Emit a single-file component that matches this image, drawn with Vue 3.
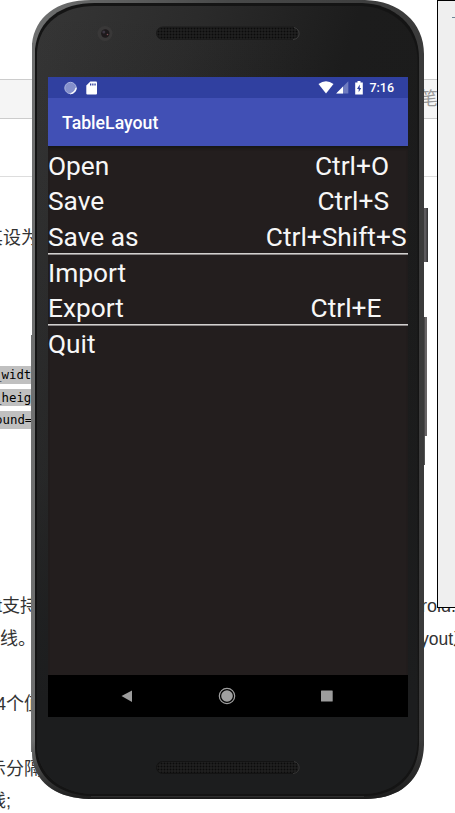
<script setup>
const commands = [
  { name: 'Open', shortcut: 'Ctrl+O', inset: 'mid' },
  { name: 'Save', shortcut: 'Ctrl+S', inset: 'mid' },
  { name: 'Save as', shortcut: 'Ctrl+Shift+S', inset: 'none' },
  { divider: true },
  { name: 'Import' },
  { name: 'Export', shortcut: 'Ctrl+E', inset: 'wide' },
  { divider: true },
  { name: 'Quit' }
]
</script>

<template>
  <div class="stage">
    <main class="article">
      <div class="toolbar"><span>笔</span></div>
      <div class="rule"></div>
      <p class="line first"><span class="cut-one">其设为</span></p>
      <div class="code">
        <code>_widt</code>
        <code>_heig</code>
        <code class="half">ound=</code>
      </div>
      <p class="line support"><span class="cut-t">t支持</span><span class="tail">roid.</span></p>
      <p class="line wire"><span>线。</span><span class="tail">yout及</span></p>
      <p class="line four"><span class="cut-four">4个值</span></p>
      <p class="line show"><span class="cut-show">示分隔</span></p>
      <p class="line last"><span class="cut-last">线;</span></p>
    </main>

    <aside class="window"><i></i></aside>

    <section class="phone">
      <svg class="chassis" width="400" height="801" viewBox="0 0 400 801">
        <defs>
          <linearGradient id="face" x1="0" y1="0" x2="1" y2=".65">
            <stop offset="0" stop-color="#363636" />
            <stop offset=".3" stop-color="#2b2b2b" />
            <stop offset=".6" stop-color="#1c1c1c" />
            <stop offset="1" stop-color="#1b1b1b" />
          </linearGradient>
          <linearGradient id="rim" x1="0" y1="0" x2="1" y2="0">
            <stop offset="0" stop-color="#6f7070" />
            <stop offset=".5" stop-color="#484949" />
            <stop offset="1" stop-color="#3a3a3a" />
          </linearGradient>
          <linearGradient id="foot" x1="0" y1="0" x2="0" y2="1">
            <stop offset="0" stop-color="#1c1d1e" stop-opacity="0" />
            <stop offset=".6" stop-color="#1c1d1e" stop-opacity=".3" />
            <stop offset=".88" stop-color="#1c1d1e" />
          </linearGradient>
          <linearGradient id="base" x1="0" y1="0" x2="0" y2="1">
            <stop offset="0" stop-color="#1c1c1c" stop-opacity="0" />
            <stop offset="1" stop-color="#1c1c1c" />
          </linearGradient>
          <pattern id="mesh" width="3" height="3" patternUnits="userSpaceOnUse">
            <rect width="3" height="3" fill="#202020" />
            <circle cx="1.500" cy="1.500" r="1" fill="#0b0b0b" />
          </pattern>
        </defs>
        <path d="M392 208h5v54h-5z" fill="#39393b" />
        <path d="M393 208h2.500v54H393z" fill="#5c5a5d" />
        <path d="M392 317h4v119h-4z" fill="#4b494a" />
        <path d="M394.500 317h1v119h-1z" fill="#858182" />
        <path d="M391 436h3v29h-3z" fill="#555" />
        <path d="M1 44C4 17 25 0 60 0H334C368 1 393 22 393 54V745C392 778 371 799 334 799H58C24 798 1 781 1 752H0V335H1Z" fill="url(#rim)" />
        <path d="M1 740V752C1 781 24 798 58 799H334C371 799 392 778 393 745V740Z" fill="url(#base)" />
        <path d="M4 49C7 20 30 3 64 3H331C363 4 388 25 388 58V744C387 775 366 796 333 796H60C28 795 4 777 4 748Z" fill="#141414" />
        <path d="M6 52C8 23 32 6 64 6H330C361 7 386.500 28 386.500 61V741C385.500 773 364 794 331 794H62C30 793 6 775 6 744Z" fill="url(#face)" />
        <path d="M6 52C8 23 32 6 64 6H330C361 7 386.500 28 386.500 61V741C385.500 773 364 794 331 794H62C30 793 6 775 6 744Z" fill="url(#foot)" />
        <path d="M60 796.500H333" stroke="#303030" />
        <circle cx="74" cy="33.500" r="7.500" fill="#393838" />
        <circle cx="74.300" cy="33.500" r="4.200" fill="#1d191b" />
        <circle cx="72.800" cy="32" r="1.500" fill="#3c3642" />
        <circle cx="76.500" cy="34.500" r=".8" fill="#805055" />
        <rect x="125.500" y="27" width="142.500" height="12.500" rx="6.200" fill="url(#mesh)" stroke="#1b1b1b" />
        <path d="M262 39.500C270 39 270 29 263 27.500" fill="none" stroke="#484848" stroke-width=".8" />
        <rect x="125.500" y="761.500" width="142.500" height="12" rx="6" fill="url(#mesh)" stroke="#131313" />
        <path d="M262 773.500C270 773 270 763 263 761.500" fill="none" stroke="#414141" stroke-width=".8" />
      </svg>

      <div class="screen">
        <header class="status">
          <svg width="14" height="14" viewBox="0 0 14 14">
            <circle cx="6.500" cy="7" r="5.700" fill="#8490cb" stroke="#aab4df" />
            <path d="M12.200 6.800A5.800 5.800 0 0 1 6.500 12.800Q11 11 12.200 6.800Z" fill="#fff" stroke="#fff" stroke-width=".8" />
          </svg>
          <svg class="sd" width="12" height="14" viewBox="0 0 12 14">
            <path d="M4.300.500H10Q11 .5 11 1.500V12.500Q11 13.500 10 13.500H1.300Q.3 13.500.3 12.500V4.500Z" fill="#fff" />
            <path d="M4 2.400h1.300v2.200H4zM6.200 2.400h1.300v2.200H6.200zM8.400 2.400h1.300v2.200H8.400z" fill="#3040a0" />
          </svg>
          <svg class="wifi" width="16" height="13" viewBox="0 0 16 13">
            <path d="M.5 3Q8-2.500 15.500 3L8 12.500Z" fill="#fff" />
          </svg>
          <svg class="cell" width="13" height="13" viewBox="0 0 13 13">
            <path d="M12.300.300V12.500H.2Z" fill="#6f7cc0" />
            <path d="M7 5.600V12.500H.2Z" fill="#fff" />
          </svg>
          <svg class="battery" width="8" height="14" viewBox="0 0 8 14">
            <path d="M2.500 0H5.500V1.500H7.800V13.500H.2V1.500H2.500Z" fill="#fff" />
            <path d="M4.800 3.500L2 8H3.700V11.300L6.200 6.900H4.700Z" fill="#3040a0" />
          </svg>
          <time>7:16</time>
        </header>
        <h1 class="appbar">TableLayout</h1>
        <div class="menu">
          <template v-for="(c, i) in commands" :key="i">
            <div v-if="c.divider" class="divider"></div>
            <div v-else class="row">
              <span>{{ c.name }}</span>
              <span v-if="c.shortcut" :class="['shortcut', c.inset]">{{ c.shortcut }}</span>
            </div>
          </template>
        </div>
        <nav class="nav">
          <svg width="20" height="20" viewBox="0 0 20 20"><path d="M4.500 10L15 4.500V16Z" fill="#9d9d9d" /></svg>
          <svg width="20" height="20" viewBox="0 0 20 20">
            <circle cx="10" cy="10" r="7.700" fill="none" stroke="#a0a0a0" stroke-width="1.200" />
            <circle cx="10" cy="10" r="5.800" fill="#a0a0a0" />
          </svg>
          <svg width="20" height="20" viewBox="0 0 20 20"><rect x="4" y="4.500" width="11.700" height="11" rx=".5" fill="#9d9d9d" /></svg>
        </nav>
      </div>
    </section>
  </div>
</template>

<style>
body {
  background: #fff;
  overflow: hidden;
}
</style>

<style scoped>
.stage {
  position: relative;
  width: 455px;
  height: 813px;
  overflow: hidden;
  background: #fff;
}
.article {
  display: flex;
  flex-direction: column;
  padding-top: 79px;
  color: #333;
  font: 18px/26px "Liberation Sans", "Noto Sans CJK SC", sans-serif;
}
.toolbar {
  display: flex;
  justify-content: flex-end;
  align-items: center;
  height: 40px;
  box-sizing: border-box;
  padding-right: 17px;
  border: solid #ccc;
  border-width: 1px 0;
  background: #f5f5f5;
  color: #999;
}
.rule {
  height: 1px;
  margin-top: 57px;
  background: #ddd;
}
.line {
  display: flex;
  justify-content: space-between;
  height: 26px;
  margin: 0;
  white-space: nowrap;
}
.first { margin-top: 48px; }
.cut-one { margin-left: -15px; }
.code {
  display: flex;
  flex-direction: column;
  align-items: flex-start;
  gap: 5px;
  margin-top: 115px;
}
.code code {
  height: 17.500px;
  margin-left: -6px;
  padding-right: 4px;
  background: #c0c0c0;
  color: #000;
  font: 12.400px/17px "DejaVu Sans Mono", monospace;
}
.code .half { margin-left: -5px; }
.support { margin-top: 164px; }
.cut-t { margin-left: -3px; }
.tail {
  width: 37px;
}
.support .tail { width: 34px; }
.wire { margin-top: 7px; }
.wire .tail { width: 35px; font-size: 17.500px; }
.four { margin-top: 39px; }
.cut-four { margin-left: -4px; }
.show { margin-top: 39px; }
.cut-show { margin-left: -12px; }
.last { margin-top: 6px; }
.cut-last { margin-left: -12px; }
.window {
  position: absolute;
  top: 0;
  left: 437px;
  width: 18px;
  height: 608px;
  box-sizing: border-box;
  padding: 16px 0 0 14px;
  border: solid #000;
  border-width: 1px 0 1px 1px;
  background: #efefef;
}
.window i {
  display: block;
  height: 1px;
  background: #6f8494;
}
.phone {
  position: absolute;
  top: 0;
  left: 31px;
  display: grid;
  padding: 77px 0 0 17px;
}
.chassis {
  position: absolute;
  top: 0;
  left: 0;
}
.screen {
  position: relative;
  display: flex;
  flex-direction: column;
  width: 360px;
  height: 640px;
  background: #231e1e;
  color: #fff;
  font-family: Roboto, sans-serif;
}
.status {
  display: flex;
  align-items: center;
  height: 21px;
  padding: 0 14px 0 16px;
  background: #3040a0;
}
.sd { margin-left: 8px; }
.wifi { margin-left: auto; }
.cell { margin-left: 2px; }
.battery { margin-left: 6px; }
.status time {
  margin-left: 6px;
  font-size: 12.500px;
  font-weight: 500;
}
.appbar {
  height: 48px;
  margin: 0;
  padding-left: 14px;
  background: #4150b5;
  font-size: 17.700px;
  font-weight: 500;
  line-height: 51px;
}
.menu {
  flex: 1;
  padding-top: 2px;
  box-shadow: inset 0 3px 3px -1px #151717;
}
.row {
  display: flex;
  justify-content: space-between;
  height: 35.300px;
  font-size: 26.300px;
  line-height: 36.300px;
  color: #f7f7f7;
}
.mid { padding-right: 19px; }
.none { padding-right: 1.500px; }
.wide { padding-right: 26.500px; }
.divider {
  height: 1px;
  border-bottom: 1px solid #898585;
  background: #d2d0cf;
  margin-top: -1px;
}
.nav {
  display: flex;
  justify-content: center;
  align-items: center;
  gap: 80px;
  height: 42px;
  padding-right: 2px;
  box-sizing: border-box;
  background: #000;
}
</style>
